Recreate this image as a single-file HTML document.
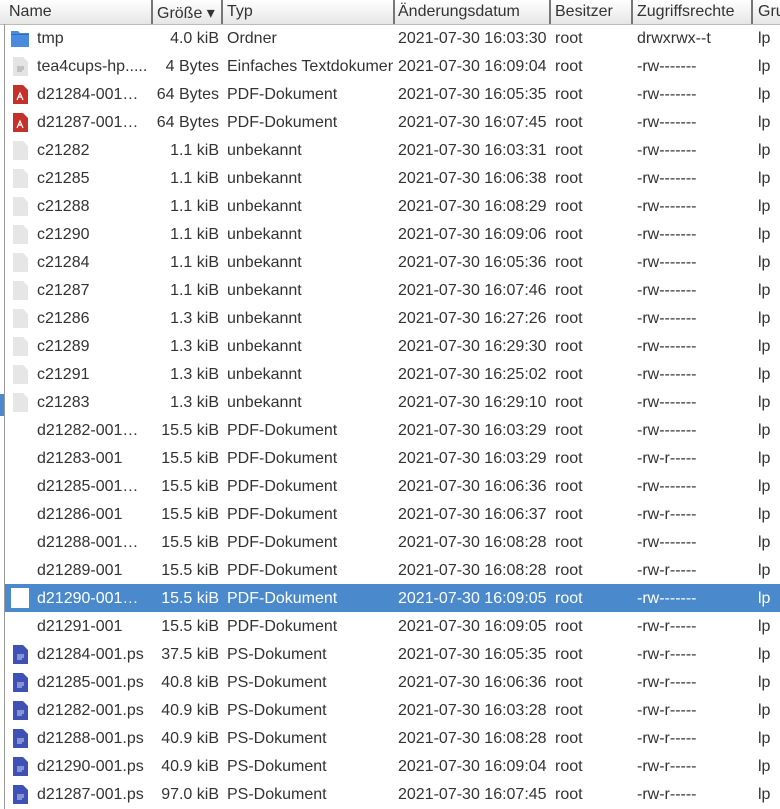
<!DOCTYPE html>
<html><head><meta charset="utf-8"><style>
body{margin:0;width:780px;height:809px;overflow:hidden;background:#fff;font-family:"Liberation Sans",sans-serif;font-size:16px;color:#333;position:relative}
.hd{position:absolute;left:0;top:0;width:780px;height:24px;background:linear-gradient(#fff,#e6e6e6);border-bottom:1px solid #bbb}
.hd span{position:absolute;top:3px;color:#333}
.sep{position:absolute;top:0;width:2px;height:24px;background:#777}
.lb{position:absolute;left:4px;top:24px;width:1px;height:785px;background:#999}
.r{position:absolute;left:5px;width:775px;height:28px}
.r span{position:absolute;top:6px;white-space:nowrap}
.n{left:32px}.s{right:561px;text-align:right}.t{left:222px;width:166px;overflow:hidden}.d{left:393px}.o{left:550px}.p{left:632px}.g{left:753px}
.sel{background:#4a89cc;color:#fff}
.ic{position:absolute;left:6px;top:5px;width:18px;height:19px}
</style></head><body>
<div class="hd">
<span style="left:9px">Name</span><div class="sep" style="left:151px"></div>
<span style="left:157px">Größe ▾</span><div class="sep" style="left:221px"></div>
<span style="left:227px">Typ</span><div class="sep" style="left:393px"></div>
<span style="left:398px">Änderungsdatum</span><div class="sep" style="left:549px"></div>
<span style="left:555px">Besitzer</span><div class="sep" style="left:631px"></div>
<span style="left:637px">Zugriffsrechte</span><div class="sep" style="left:751px"></div>
<span style="left:758px">Gru</span>
</div>
<div class="lb"></div>
<div style="position:absolute;left:0;top:394px;width:4px;height:22px;background:#4a89cc"></div>

<svg width="0" height="0" style="position:absolute"><defs>
<symbol id="fold" viewBox="0 0 18 19"><path d="M0 2h7l2 2h9v14H0z" fill="#4a8be0"/><rect x="0" y="5" width="18" height="1" fill="#2f6cbf"/></symbol>
<symbol id="txt" viewBox="0 0 18 19"><path d="M2 0h10l5 5v14H2z" fill="#e4e4e4"/><path d="M6 10h7M6 12h7M6 14h5" stroke="#888" stroke-width="0.8"/></symbol>
<symbol id="pdf" viewBox="0 0 18 19"><path d="M2 0h10l5 5v14H2z" fill="#c4312b"/><path d="M6 15l3-7 3 7M7 12h4" stroke="#fff" stroke-width="1.2" fill="none"/></symbol>
<symbol id="unk" viewBox="0 0 18 19"><path d="M2 0h10l5 5v14H2z" fill="#e6e6e6"/></symbol>
<symbol id="ps" viewBox="0 0 18 19"><path d="M2 0h10l5 5v14H2z" fill="#3f51b5"/><path d="M6 10h7M6 12h7M6 14h5" stroke="#fff" stroke-width="0.8"/></symbol>
</defs></svg>

<div class="r" style="top:24px"><svg class="ic"><use href="#fold"/></svg><span class="n">tmp</span><span class="s">4.0 kiB</span><span class="t">Ordner</span><span class="d">2021-07-30 16:03:30</span><span class="o">root</span><span class="p">drwxrwx--t</span><span class="g">lp</span></div>
<div class="r" style="top:52px"><svg class="ic"><use href="#txt"/></svg><span class="n">tea4cups-hp.....</span><span class="s">4 Bytes</span><span class="t">Einfaches Textdokument</span><span class="d">2021-07-30 16:09:04</span><span class="o">root</span><span class="p">-rw-------</span><span class="g">lp</span></div>
<div class="r" style="top:80px"><svg class="ic"><use href="#pdf"/></svg><span class="n">d21284-001…</span><span class="s">64 Bytes</span><span class="t">PDF-Dokument</span><span class="d">2021-07-30 16:05:35</span><span class="o">root</span><span class="p">-rw-------</span><span class="g">lp</span></div>
<div class="r" style="top:108px"><svg class="ic"><use href="#pdf"/></svg><span class="n">d21287-001…</span><span class="s">64 Bytes</span><span class="t">PDF-Dokument</span><span class="d">2021-07-30 16:07:45</span><span class="o">root</span><span class="p">-rw-------</span><span class="g">lp</span></div>
<div class="r" style="top:136px"><svg class="ic"><use href="#unk"/></svg><span class="n">c21282</span><span class="s">1.1 kiB</span><span class="t">unbekannt</span><span class="d">2021-07-30 16:03:31</span><span class="o">root</span><span class="p">-rw-------</span><span class="g">lp</span></div>
<div class="r" style="top:164px"><svg class="ic"><use href="#unk"/></svg><span class="n">c21285</span><span class="s">1.1 kiB</span><span class="t">unbekannt</span><span class="d">2021-07-30 16:06:38</span><span class="o">root</span><span class="p">-rw-------</span><span class="g">lp</span></div>
<div class="r" style="top:192px"><svg class="ic"><use href="#unk"/></svg><span class="n">c21288</span><span class="s">1.1 kiB</span><span class="t">unbekannt</span><span class="d">2021-07-30 16:08:29</span><span class="o">root</span><span class="p">-rw-------</span><span class="g">lp</span></div>
<div class="r" style="top:220px"><svg class="ic"><use href="#unk"/></svg><span class="n">c21290</span><span class="s">1.1 kiB</span><span class="t">unbekannt</span><span class="d">2021-07-30 16:09:06</span><span class="o">root</span><span class="p">-rw-------</span><span class="g">lp</span></div>
<div class="r" style="top:248px"><svg class="ic"><use href="#unk"/></svg><span class="n">c21284</span><span class="s">1.1 kiB</span><span class="t">unbekannt</span><span class="d">2021-07-30 16:05:36</span><span class="o">root</span><span class="p">-rw-------</span><span class="g">lp</span></div>
<div class="r" style="top:276px"><svg class="ic"><use href="#unk"/></svg><span class="n">c21287</span><span class="s">1.1 kiB</span><span class="t">unbekannt</span><span class="d">2021-07-30 16:07:46</span><span class="o">root</span><span class="p">-rw-------</span><span class="g">lp</span></div>
<div class="r" style="top:304px"><svg class="ic"><use href="#unk"/></svg><span class="n">c21286</span><span class="s">1.3 kiB</span><span class="t">unbekannt</span><span class="d">2021-07-30 16:27:26</span><span class="o">root</span><span class="p">-rw-------</span><span class="g">lp</span></div>
<div class="r" style="top:332px"><svg class="ic"><use href="#unk"/></svg><span class="n">c21289</span><span class="s">1.3 kiB</span><span class="t">unbekannt</span><span class="d">2021-07-30 16:29:30</span><span class="o">root</span><span class="p">-rw-------</span><span class="g">lp</span></div>
<div class="r" style="top:360px"><svg class="ic"><use href="#unk"/></svg><span class="n">c21291</span><span class="s">1.3 kiB</span><span class="t">unbekannt</span><span class="d">2021-07-30 16:25:02</span><span class="o">root</span><span class="p">-rw-------</span><span class="g">lp</span></div>
<div class="r" style="top:388px"><svg class="ic"><use href="#unk"/></svg><span class="n">c21283</span><span class="s">1.3 kiB</span><span class="t">unbekannt</span><span class="d">2021-07-30 16:29:10</span><span class="o">root</span><span class="p">-rw-------</span><span class="g">lp</span></div>
<div class="r" style="top:416px"><span class="n">d21282-001…</span><span class="s">15.5 kiB</span><span class="t">PDF-Dokument</span><span class="d">2021-07-30 16:03:29</span><span class="o">root</span><span class="p">-rw-------</span><span class="g">lp</span></div>
<div class="r" style="top:444px"><span class="n">d21283-001</span><span class="s">15.5 kiB</span><span class="t">PDF-Dokument</span><span class="d">2021-07-30 16:03:29</span><span class="o">root</span><span class="p">-rw-r-----</span><span class="g">lp</span></div>
<div class="r" style="top:472px"><span class="n">d21285-001…</span><span class="s">15.5 kiB</span><span class="t">PDF-Dokument</span><span class="d">2021-07-30 16:06:36</span><span class="o">root</span><span class="p">-rw-------</span><span class="g">lp</span></div>
<div class="r" style="top:500px"><span class="n">d21286-001</span><span class="s">15.5 kiB</span><span class="t">PDF-Dokument</span><span class="d">2021-07-30 16:06:37</span><span class="o">root</span><span class="p">-rw-r-----</span><span class="g">lp</span></div>
<div class="r" style="top:528px"><span class="n">d21288-001…</span><span class="s">15.5 kiB</span><span class="t">PDF-Dokument</span><span class="d">2021-07-30 16:08:28</span><span class="o">root</span><span class="p">-rw-------</span><span class="g">lp</span></div>
<div class="r" style="top:556px"><span class="n">d21289-001</span><span class="s">15.5 kiB</span><span class="t">PDF-Dokument</span><span class="d">2021-07-30 16:08:28</span><span class="o">root</span><span class="p">-rw-r-----</span><span class="g">lp</span></div>
<div class="r sel" style="top:584px"><div style="position:absolute;left:6px;top:4px;width:18px;height:20px;background:#fff"></div><span class="n">d21290-001…</span><span class="s">15.5 kiB</span><span class="t">PDF-Dokument</span><span class="d">2021-07-30 16:09:05</span><span class="o">root</span><span class="p">-rw-------</span><span class="g">lp</span></div>
<div class="r" style="top:612px"><span class="n">d21291-001</span><span class="s">15.5 kiB</span><span class="t">PDF-Dokument</span><span class="d">2021-07-30 16:09:05</span><span class="o">root</span><span class="p">-rw-r-----</span><span class="g">lp</span></div>
<div class="r" style="top:640px"><svg class="ic"><use href="#ps"/></svg><span class="n">d21284-001.ps</span><span class="s">37.5 kiB</span><span class="t">PS-Dokument</span><span class="d">2021-07-30 16:05:35</span><span class="o">root</span><span class="p">-rw-r-----</span><span class="g">lp</span></div>
<div class="r" style="top:668px"><svg class="ic"><use href="#ps"/></svg><span class="n">d21285-001.ps</span><span class="s">40.8 kiB</span><span class="t">PS-Dokument</span><span class="d">2021-07-30 16:06:36</span><span class="o">root</span><span class="p">-rw-r-----</span><span class="g">lp</span></div>
<div class="r" style="top:696px"><svg class="ic"><use href="#ps"/></svg><span class="n">d21282-001.ps</span><span class="s">40.9 kiB</span><span class="t">PS-Dokument</span><span class="d">2021-07-30 16:03:28</span><span class="o">root</span><span class="p">-rw-r-----</span><span class="g">lp</span></div>
<div class="r" style="top:724px"><svg class="ic"><use href="#ps"/></svg><span class="n">d21288-001.ps</span><span class="s">40.9 kiB</span><span class="t">PS-Dokument</span><span class="d">2021-07-30 16:08:28</span><span class="o">root</span><span class="p">-rw-r-----</span><span class="g">lp</span></div>
<div class="r" style="top:752px"><svg class="ic"><use href="#ps"/></svg><span class="n">d21290-001.ps</span><span class="s">40.9 kiB</span><span class="t">PS-Dokument</span><span class="d">2021-07-30 16:09:04</span><span class="o">root</span><span class="p">-rw-r-----</span><span class="g">lp</span></div>
<div class="r" style="top:780px"><svg class="ic"><use href="#ps"/></svg><span class="n">d21287-001.ps</span><span class="s">97.0 kiB</span><span class="t">PS-Dokument</span><span class="d">2021-07-30 16:07:45</span><span class="o">root</span><span class="p">-rw-r-----</span><span class="g">lp</span></div>
</body></html>
